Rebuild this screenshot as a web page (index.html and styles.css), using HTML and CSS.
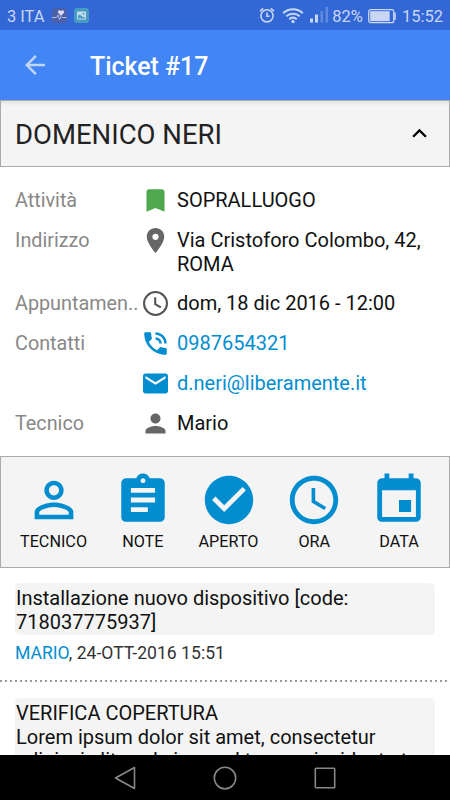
FILE: index.html
```html
<!DOCTYPE html>
<html lang="it">
<head>
    <meta charset="UTF-8">
    <meta name="viewport" content="width=device-width, initial-scale=1.0">
    <title>Ticket #17</title>
    <link rel="stylesheet" href="styles.css">
</head>
<body>
    <div class="status-bar">
        <span class="carrier">3 ITA</span>
        <svg class="app-icon" width="15" height="15" viewBox="0 0 15 15">
            <rect width="15" height="15" rx="3.5" fill="#4b60a8"/>
            <path d="M9 8 6 4.800C5 3 7.500 1 9 3c1.500-2 4-.2 3 1.800z" fill="#d5dcf2"/>
            <path d="M0 9.500h4.500L6 7l1.500 4.500L9 8.500l1 1h4.500" fill="none" stroke="#b9c4e6" stroke-width=".9"/>
        </svg>
        <svg class="app-icon" width="15" height="15" viewBox="0 0 15 15">
            <rect width="15" height="15" rx="3" fill="#479bc2"/>
            <rect x="3" y="3.500" width="9" height="8" rx="1" fill="#c4dcee"/>
            <path d="M4 10.500V7.500l2-1 2 2 3 1v1z" fill="#479bc2"/>
            <circle cx="9.500" cy="5.800" r="1" fill="#479bc2"/>
        </svg>
        <div class="status-right">
            <svg class="alarm" width="16" height="16" viewBox="0 0 16 16">
                <circle cx="8" cy="8.800" r="6.100"/>
                <path d="M8 5.500v3.800h2.500M1 4.200 4.200 1.300M15 4.200l-3.200-2.900"/>
            </svg>
            <svg class="wifi" width="22" height="17" viewBox="0 0 22 17">
                <path d="M1.200 6.200c5.600-5.200 14-5.200 19.600 0M4.300 9.300c3.900-3.500 9.500-3.500 13.400 0M7.300 12.200c2.200-1.900 5.200-1.900 7.400 0"/>
                <circle cx="11" cy="14.600" r="1.700"/>
            </svg>
            <svg class="signal" width="18" height="16" viewBox="0 0 18 16">
                <rect x="0" y="11.500" width="3" height="4"/>
                <rect x="5" y="7.500" width="3" height="8"/>
                <rect class="dim" x="10.500" y="4" width="2.500" height="11.500"/>
                <rect class="dim" x="15.500" y="0" width="2.500" height="15.500"/>
            </svg>
            <span class="percent">82%</span>
            <svg class="battery" width="28" height="15" viewBox="0 0 28 15">
                <rect x=".7" y=".7" width="25" height="13" rx="2" fill="none" stroke="#c9d6f4" stroke-width="1.300"/>
                <rect x="2.200" y="2.200" width="19.500" height="10" fill="#c9d6f4"/>
                <path d="M27 3.500v7.500" stroke="#c9d6f4" stroke-width="1.500"/>
            </svg>
            <span class="time">15:52</span>
        </div>
    </div>

    <div class="toolbar">
        <svg width="30" height="30" viewBox="0 0 24 24">
            <path d="M20 11H7.830l5.590-5.590L12 4l-8 8 8 8 1.410-1.410L7.830 13H20v-2z"/>
        </svg>
        <h1>Ticket #17</h1>
    </div>

    <div class="content">
        <div class="customer">
            <span>DOMENICO NERI</span>
            <svg width="29" height="29" viewBox="0 0 24 24">
                <path d="M7.410 15.410 12 10.830l4.590 4.580L18 14l-6-6-6 6z"/>
            </svg>
        </div>

        <div class="details">
            <div class="row">
                <span class="label">Attività</span>
                <svg class="green" viewBox="0 0 24 24"><path d="M17 3H7c-1.100 0-1.990.9-1.990 2L5 21l7-3 7 3V5c0-1.100-.9-2-2-2z" transform="matrix(1.240 0 0 1.200 -2.880 -2.500)"/></svg>
                <span class="value">SOPRALLUOGO</span>
            </div>
            <div class="row">
                <span class="label">Indirizzo</span>
                <svg viewBox="0 0 24 24"><path d="M12 0C7.330 0 3.600 3.730 3.600 8.400c0 6.300 8.400 15.600 8.400 15.600s8.400-9.300 8.400-15.600C20.400 3.730 16.670 0 12 0zm0 11.400a3 3 0 1 1 0-6 3 3 0 0 1 0 6z"/></svg>
                <span class="value">Via Cristoforo Colombo, 42, ROMA</span>
            </div>
            <div class="row">
                <span class="label">Appuntamen..</span>
                <svg class="line" viewBox="0 0 24 24"><circle cx="12" cy="12" r="11"/><path d="M11.700 6v6.700l5.400 3"/></svg>
                <span class="value">dom, 18 dic 2016 - 12:00</span>
            </div>
            <div class="row">
                <span class="label">Contatti</span>
                <svg class="blue" viewBox="2 2 20 20"><path d="M20 15.500c-1.250 0-2.450-.2-3.570-.57-.1-.03-.21-.05-.31-.05-.26 0-.51.1-.71.290l-2.200 2.200c-2.830-1.440-5.150-3.750-6.590-6.590l2.200-2.210c.28-.26.36-.65.25-1C8.700 6.450 8.500 5.250 8.500 4c0-.55-.45-1-1-1H4c-.55 0-1 .45-1 1 0 9.390 7.610 17 17 17 .55 0 1-.45 1-1v-3.500c0-.55-.45-1-1-1zM19 12h2c0-4.970-4.030-9-9-9v2c3.870 0 7 3.130 7 7zm-4 0h2c0-2.760-2.240-5-5-5v2c1.660 0 3 1.340 3 3z"/></svg>
                <a class="value">0987654321</a>
            </div>
            <div class="row">
                <span class="label"></span>
                <svg class="blue" viewBox="2 2 20 20"><path d="M20 4H4c-1.100 0-1.990.9-1.990 2L2 18c0 1.100.9 2 2 2h16c1.100 0 2-.9 2-2V6c0-1.100-.9-2-2-2zm0 4-8 5-8-5V6l8 5 8-5v2z"/></svg>
                <a class="value">d.neri@liberamente.it</a>
            </div>
            <div class="row">
                <span class="label">Tecnico</span>
                <svg viewBox="2 2 20 20"><path d="M12 12c2.210 0 4-1.790 4-4s-1.790-4-4-4-4 1.790-4 4 1.790 4 4 4zm0 2c-2.670 0-8 1.340-8 4v2h16v-2c0-2.660-5.330-4-8-4z"/></svg>
                <span class="value">Mario</span>
            </div>
        </div>

        <div class="actions">
            <div class="action">
                <svg viewBox="0 0 24 24"><path d="M12 5.900c1.160 0 2.100.94 2.100 2.100s-.94 2.100-2.100 2.100S9.900 9.160 9.900 8s.94-2.100 2.100-2.100m0 9c2.970 0 6.100 1.460 6.100 2.100v1.100H5.900V17c0-.64 3.130-2.100 6.100-2.100M12 4C9.790 4 8 5.790 8 8s1.790 4 4 4 4-1.790 4-4-1.790-4-4-4zm0 9c-2.670 0-8 1.340-8 4v3h16v-3c0-2.660-5.330-4-8-4z"/></svg>
                <span>TECNICO</span>
            </div>
            <div class="action">
                <svg viewBox="0 0 24 24"><path d="M19 3h-4.180C14.400 1.840 13.300 1 12 1c-1.300 0-2.400.84-2.820 2H5c-1.100 0-2 .9-2 2v14c0 1.100.9 2 2 2h14c1.100 0 2-.9 2-2V5c0-1.100-.9-2-2-2zm-7 0c.55 0 1 .45 1 1s-.45 1-1 1-1-.45-1-1 .45-1 1-1zm2 14H7v-2h7v2zm3-4H7v-2h10v2zm0-4H7V7h10v2z"/></svg>
                <span>NOTE</span>
            </div>
            <div class="action">
                <svg viewBox="0 0 24 24"><path d="M12 2C6.480 2 2 6.480 2 12s4.480 10 10 10 10-4.480 10-10S17.520 2 12 2zm-2 15-5-5 1.410-1.410L10 14.170l7.590-7.590L19 8l-9 9z"/></svg>
                <span>APERTO</span>
            </div>
            <div class="action">
                <svg viewBox="0 0 24 24"><path d="M11.990 2C6.470 2 2 6.480 2 12s4.470 10 9.990 10C17.520 22 22 17.520 22 12S17.520 2 11.990 2zM12 20c-4.420 0-8-3.580-8-8s3.580-8 8-8 8 3.580 8 8-3.580 8-8 8zm.5-13H11v6l5.250 3.150.75-1.230-4.500-2.670z"/></svg>
                <span>ORA</span>
            </div>
            <div class="action">
                <svg viewBox="0 0 24 24"><path d="M17 12h-5v5h5v-5zM16 1v2H8V1H6v2H5c-1.110 0-1.990.9-1.990 2L3 19c0 1.100.89 2 2 2h14c1.100 0 2-.9 2-2V5c0-1.100-.9-2-2-2h-1V1h-2zm3 18H5V8h14v11z"/></svg>
                <span>DATA</span>
            </div>
        </div>

        <div class="note">
            <div class="note-text">Installazione nuovo dispositivo [code: 718037775937]</div>
            <div class="note-meta"><a>MARIO</a>, 24-OTT-2016 15:51</div>
        </div>
        <div class="note">
            <div class="note-text">VERIFICA COPERTURA<br>Lorem ipsum dolor sit amet, consectetur adipisci elit, sed eiusmod tempor incidunt ut</div>
        </div>
    </div>

    <div class="nav-bar">
        <svg width="24" height="24" viewBox="0 0 24 24"><path d="M21.500 1.500v21L2.500 12z"/></svg>
        <svg width="24" height="24" viewBox="0 0 24 24"><circle cx="12" cy="12" r="10.700"/></svg>
        <svg width="24" height="24" viewBox="0 0 24 24"><rect x="2.300" y="2.300" width="19.400" height="19.400" rx=".8"/></svg>
    </div>
</body>
</html>
```
FILE: styles.css
```css
* {
    margin: 0;
    padding: 0;
    box-sizing: border-box;
}

body {
    font-family: Roboto, 'Noto Sans', sans-serif;
    background: #fff;
    color: #111;
    height: 100vh;
    display: flex;
    flex-direction: column;
    overflow: hidden;
}

svg {
    display: block;
    flex-shrink: 0;
}

a {
    color: #028dd1;
}

.status-bar {
    height: 30px;
    flex-shrink: 0;
    padding: 2px 7px 0 7px;
    background: #3367d6;
    color: #c9d6f4;
    font-size: 16.5px;
    display: flex;
    align-items: center;
}

.app-icon {
    margin: 0 0 2px 7px;
}

.status-right {
    margin-left: auto;
    display: flex;
    align-items: center;
}

.alarm,
.wifi {
    margin-bottom: 2px;
    fill: none;
    stroke: #c9d6f4;
    stroke-width: 1.6;
}

.alarm {
    margin-right: 1px;
}

.wifi {
    margin-left: 6px;
    stroke-width: 2;
}

.wifi circle {
    fill: #c9d6f4;
    stroke: none;
}

.signal {
    margin: 0 0 2px 6px;
    fill: #c9d6f4;
}

.signal .dim {
    opacity: 0.3;
}

.percent {
    margin-left: 4px;
}

.battery {
    margin: 0 6px 0 5px;
}

.toolbar {
    height: 70px;
    flex-shrink: 0;
    padding-left: 20px;
    background: #4285f4;
    display: flex;
    align-items: center;
    gap: 40px;
}

.toolbar svg {
    fill: #bed6fb;
}

.toolbar h1 {
    padding-top: 2px;
    color: #fff;
    font-size: 24.9px;
    font-weight: 500;
}

.content {
    flex: 1;
    min-height: 0;
    overflow: hidden;
}

.customer {
    height: 67px;
    padding: 2px 15px 0 14px;
    background: linear-gradient(#e5e5e5, #f4f4f4 5px);
    border: 1px solid #aaa;
    display: flex;
    align-items: center;
    justify-content: space-between;
    font-size: 27.5px;
    color: #222;
}

.customer svg {
    margin-bottom: 3px;
}

.details {
    padding: 22px 15px 0 15px;
    height: 289px;
    font-size: 20px;
    line-height: 23.7px;
}

.row {
    display: flex;
    margin-bottom: 16.1px;
}

.row svg {
    width: 25px;
    height: 25px;
    margin: -1px 9px -1px 5px;
    fill: #666;
}

.row .green {
    fill: #4fa84d;
}

.row .blue {
    fill: #028dd1;
}

.row .line {
    fill: none;
    stroke: #555;
    stroke-width: 2;
}

.label {
    width: 123px;
    color: #888;
    font-size: 19.8px;
    white-space: nowrap;
}

.value {
    flex: 1;
}

.actions {
    height: 112px;
    padding: 14px 21px 0 19px;
    background: #f4f4f4;
    border: 1px solid #aaa;
    display: flex;
    justify-content: space-between;
}

.action {
    display: flex;
    flex-direction: column;
    align-items: center;
    font-size: 16.2px;
}

.action svg {
    width: 58px;
    height: 58px;
    margin-bottom: 3px;
    fill: #028dd1;
}

.note {
    padding: 15px 15px 0 15px;
    height: 115px;
    background: radial-gradient(circle at 1px 1px, #999 0.8px, transparent 1.2px) 0 bottom / 5px 3px repeat-x;
}

.note-text {
    padding: 4px 1px 1px 1px;
    background: #f4f4f4;
    border-radius: 5px;
    font-size: 20px;
    line-height: 23.5px;
    color: #111;
}

.note-meta {
    margin-top: 8px;
    font-size: 17.6px;
    line-height: 20px;
    color: #333;
}

.nav-bar {
    height: 45px;
    flex-shrink: 0;
    background: #000;
    display: flex;
    align-items: center;
    justify-content: center;
    gap: 76px;
}

.nav-bar svg {
    fill: none;
    stroke: #888;
    stroke-width: 1.6;
    stroke-linejoin: round;
}
```
